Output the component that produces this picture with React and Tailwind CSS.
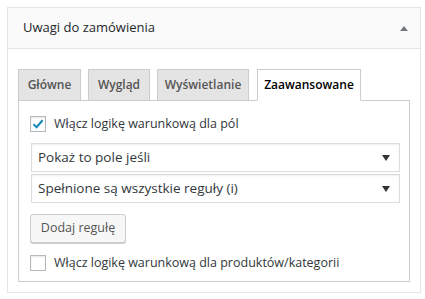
const TABS = [
  { label: 'Główne', w: 'w-[63px]' },
  { label: 'Wygląd', w: 'w-[62px]' },
  { label: 'Wyświetlanie', w: 'w-[92px]' },
  { label: 'Zaawansowane', w: 'w-[104px]', active: true },
];

function Checkbox({ checked }) {
  return (
    <span className="flex h-[16px] w-[16px] shrink-0 items-center justify-center border border-[#b4b9be] bg-white shadow-[inset_0_1px_2px_rgba(0,0,0,0.1)]">
      {checked && (
        <svg width="14" height="14" viewBox="0 0 14 14">
          <path d="M2.5 7.2 L5.6 10.2 L11.6 3.2" fill="none" stroke="#1e8cbe" strokeWidth="2.2" />
        </svg>
      )}
    </span>
  );
}

function Select({ value }) {
  return (
    <div className="flex h-[29px] items-center justify-between border border-[#ddd] bg-white pl-[6px] pr-[9px] text-[13.5px] text-[#32373c] shadow-[inset_0_1px_2px_rgba(0,0,0,0.07)]">
      <span>{value}</span>
      <svg width="8" height="6" viewBox="0 0 8 6">
        <path d="M0 0 H8 L4 6 Z" fill="#333" />
      </svg>
    </div>
  );
}

export default function App() {
  return (
    <div className="min-h-[299px] bg-white p-[7px] font-['Open_Sans',sans-serif]">
      <div className="w-[414px] border border-[#e5e5e5] bg-white">
        <div className="flex h-[41px] items-center justify-between border-b border-[#e5e5e5] bg-[#fafafa] pl-[15px] pr-[12px]">
          <span className="text-[13px] text-[#23282d]">Uwagi do zamówienia</span>
          <svg width="8" height="5" viewBox="0 0 8 5">
            <path d="M0 5 H8 L4 0 Z" fill="#72777c" />
          </svg>
        </div>
        <div className="px-[10px] pb-[10px] pt-[20px]">
          <div className="flex items-end">
            {TABS.map((t, i) => (
              <div
                key={t.label}
                className={`-mb-px flex h-[32px] items-center justify-center border border-[#ccc] text-[12px] font-semibold ${t.w} ${
                  i === 0 ? '' : i === 3 ? 'ml-[8px]' : 'ml-[7px]'
                } ${t.active ? 'border-b-white bg-white text-black' : 'bg-[#e4e4e4] text-[#555]'}`}
              >
                {t.label}
              </div>
            ))}
          </div>
          <div className="border border-[#ccc] pb-[10px] pl-[11px] pr-[9px] pt-[15px] text-[12.5px] text-[#32373c]">
            <label className="flex h-[16px] items-center gap-[8px]">
              <Checkbox checked />
              <span>Włącz logikę warunkową dla pól</span>
            </label>
            <div className="ml-[1px] mt-[11px] flex flex-col gap-[2px]">
              <Select value="Pokaż to pole jeśli" />
              <Select value="Spełnione są wszystkie reguły (i)" />
            </div>
            <button className="mt-[11px] h-[29px] w-[96px] rounded-[3px] border border-[#ccc] bg-[#f7f7f7] text-[12.5px] text-[#555] shadow-[0_1px_0_#ccc]">
              Dodaj regułę
            </button>
            <label className="mt-[12px] flex h-[16px] items-center gap-[8px]">
              <Checkbox />
              <span>Włącz logikę warunkową dla produktów/kategorii</span>
            </label>
          </div>
        </div>
      </div>
    </div>
  );
}
